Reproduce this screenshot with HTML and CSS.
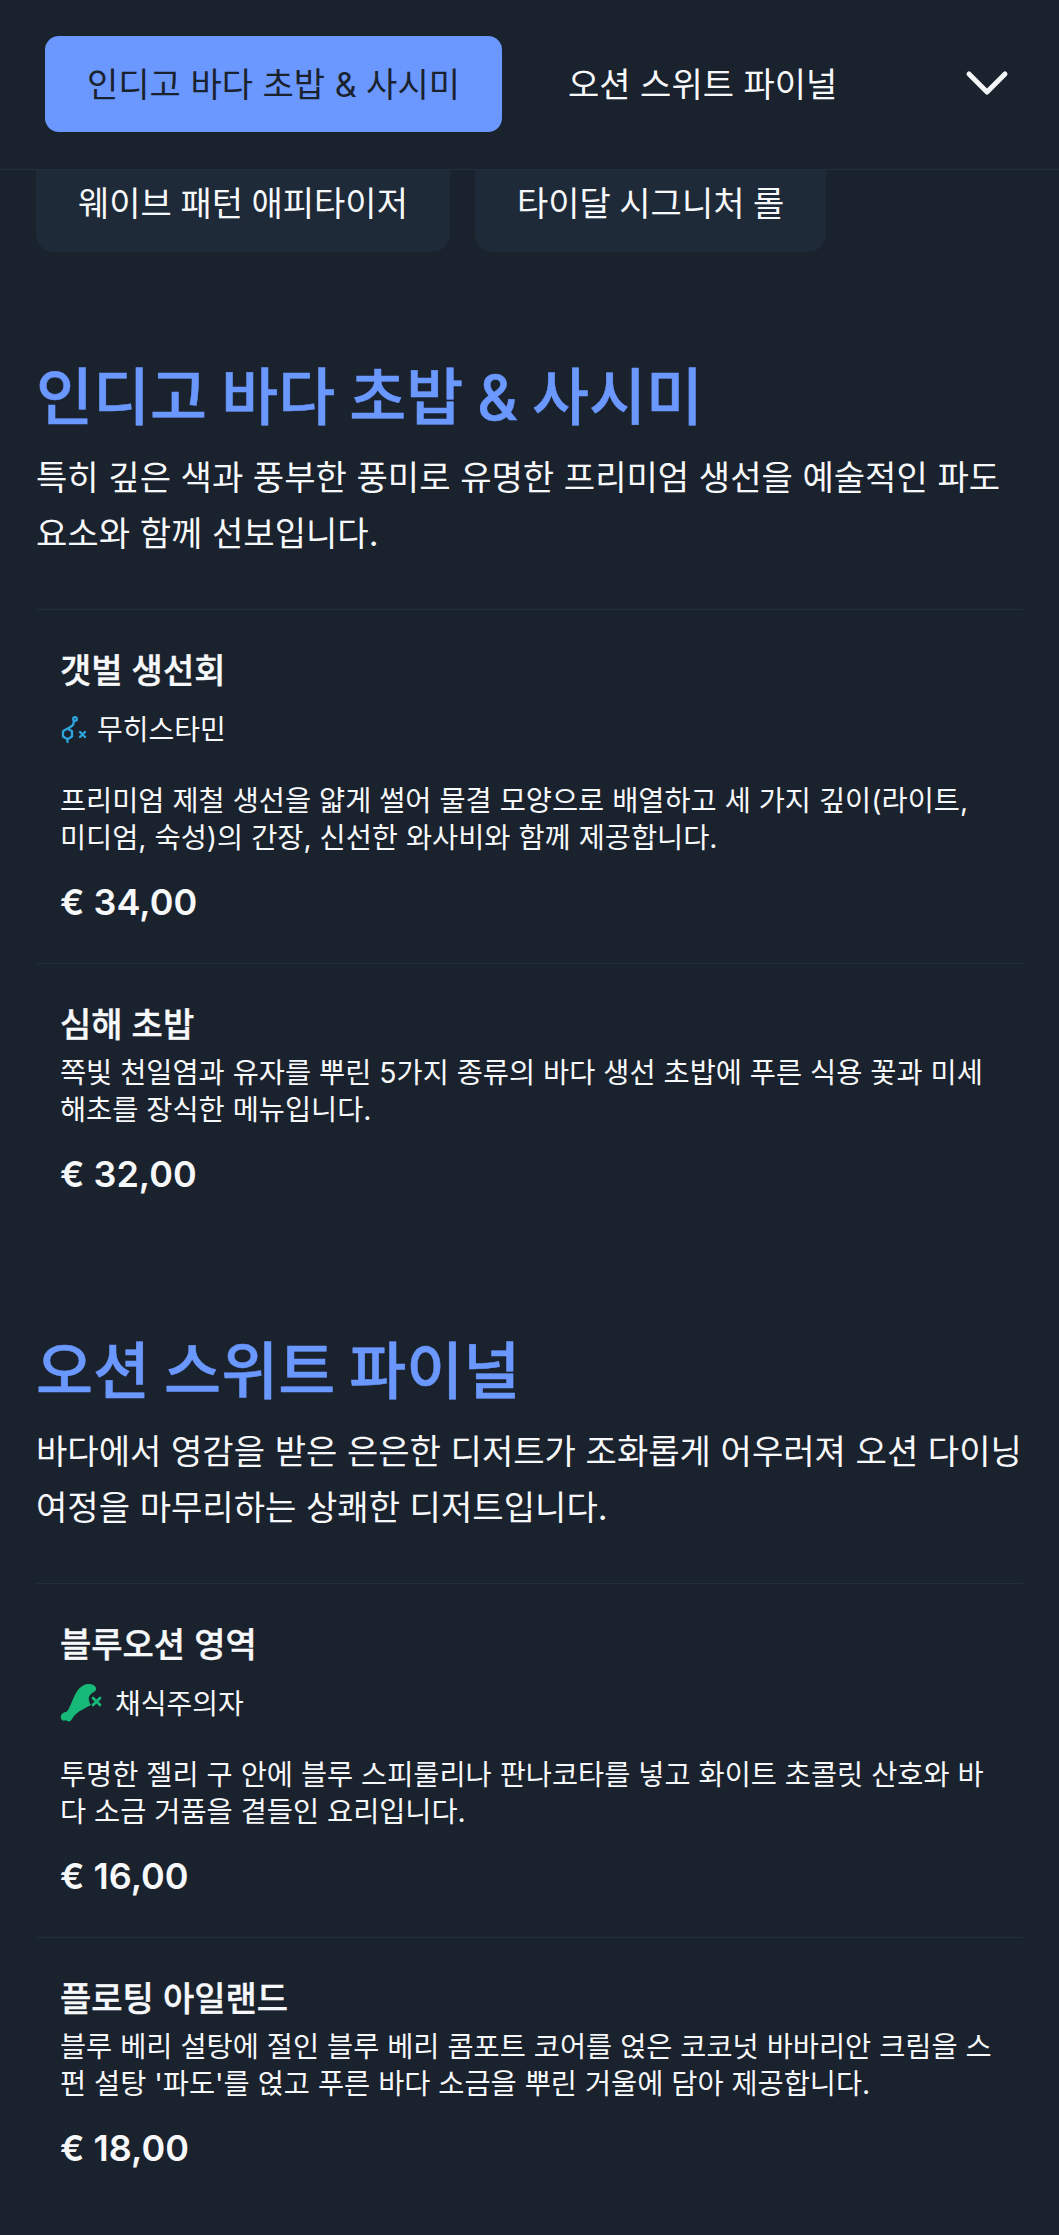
FILE: index.html
```html
<!DOCTYPE html>
<html lang="ko">
<head>
<meta charset="utf-8">
<title>메뉴</title>
<link rel="stylesheet" href="styles.css">
</head>
<body>
<header class="tabs">
  <a class="tab tab-active">인디고 바다 초밥 &amp; 사시미</a>
  <a class="tab">오션 스위트 파이널</a>
  <svg class="chevron" viewBox="0 0 44 28" aria-hidden="true"><path d="M4 4 L22 22 L40 4" fill="none" stroke="#f4f6f8" stroke-width="5" stroke-linecap="round" stroke-linejoin="round"/></svg>
</header>
<div class="chips">
  <a class="chip">웨이브 패턴 애피타이저</a>
  <a class="chip">타이달 시그니처 롤</a>
</div>
<main>
  <section class="section">
    <h2 class="section-title">인디고 바다 초밥 &amp; 사시미</h2>
    <p class="section-desc">특히 깊은 색과 풍부한 풍미로 유명한 프리미엄 생선을 예술적인 파도 요소와 함께 선보입니다.</p>
    <ul class="items">
      <li class="item">
        <h3 class="item-name">갯벌 생선회</h3>
        <div class="diet">
          <svg class="diet-icon" viewBox="0 0 26 28" aria-hidden="true"><g fill="none" stroke="#2ea3dc" stroke-width="2.300" stroke-linecap="round" stroke-linejoin="round"><path d="M7.500 12.500 L12 15.200 V20.600 L7.500 23.300 L3 20.600 V15.200 Z"/><path d="M9 12 L13 9 L14 5"/><circle cx="15" cy="3" r="1.900"/><path d="M7.500 23.300 V26"/></g><path d="M20 16 L25 21 M25 16 L20 21" fill="none" stroke="#2ea3dc" stroke-width="2.400" stroke-linecap="round"/></svg>
          <span>무히스타민</span>
        </div>
        <p class="item-desc">프리미엄 제철 생선을 얇게 썰어 물결 모양으로 배열하고 세 가지 깊이(라이트, 미디엄, 숙성)의 간장, 신선한 와사비와 함께 제공합니다.</p>
        <div class="price">€ 34,00</div>
      </li>
      <li class="item">
        <h3 class="item-name">심해 초밥</h3>
        <p class="item-desc tight">쪽빛 천일염과 유자를 뿌린 5가지 종류의 바다 생선 초밥에 푸른 식용 꽃과 미세 해초를 장식한 메뉴입니다.</p>
        <div class="price">€ 32,00</div>
      </li>
    </ul>
  </section>
  <section class="section">
    <h2 class="section-title">오션 스위트 파이널</h2>
    <p class="section-desc">바다에서 영감을 받은 은은한 디저트가 조화롭게 어우러져 오션 다이닝 여정을 마무리하는 상쾌한 디저트입니다.</p>
    <ul class="items">
      <li class="item">
        <h3 class="item-name">블루오션 영역</h3>
        <div class="diet">
          <svg class="diet-icon wide" viewBox="0 0 44 40" aria-hidden="true"><path fill="#17b978" d="M24 1 C28 -1 35 0 36 4 C37 7 33 8 31 10 C28 12 28 17 31 21 C26 24 20 26 16 30 C14 32 13 33 12 35 C11 38 7 38 6 36 C3 38 0 35 1 32 C1 30 4 28 6 28 C8 27 9 24 11 20 C14 13 17 4 24 1 Z"/><path d="M33 14 L40 21 M40 14 L33 21" fill="none" stroke="#17b978" stroke-width="2.800" stroke-linecap="round"/></svg>
          <span>채식주의자</span>
        </div>
        <p class="item-desc">투명한 젤리 구 안에 블루 스피룰리나 판나코타를 넣고 화이트 초콜릿 산호와 바다 소금 거품을 곁들인 요리입니다.</p>
        <div class="price">€ 16,00</div>
      </li>
      <li class="item">
        <h3 class="item-name">플로팅 아일랜드</h3>
        <p class="item-desc tight">블루 베리 설탕에 절인 블루 베리 콤포트 코어를 얹은 코코넛 바바리안 크림을 스펀 설탕 '파도'를 얹고 푸른 바다 소금을 뿌린 거울에 담아 제공합니다.</p>
        <div class="price">€ 18,00</div>
      </li>
    </ul>
  </section>
</main>
</body>
</html>
```
FILE: styles.css
```css
* { box-sizing: border-box; }
html, body { margin: 0; padding: 0; }
body {
  background: #1a222e;
  color: #f7f8fa;
  font-family: "Inter", "Noto Sans CJK KR", "Noto Sans", sans-serif;
  width: 1059px;
  height: 2235px;
  overflow: hidden;
}
.tabs {
  display: flex;
  align-items: center;
  height: 170px;
  padding: 0 50px 2px 45px;
  border-bottom: 1px solid #1f2f3d;
}
.tab {
  display: flex;
  align-items: center;
  height: 96px;
  padding: 0 42px 3px;
  font-size: 34px;
  border-radius: 14px;
  white-space: nowrap;
}
.tab-active {
  background: #6b98ff;
  color: #1a222e;
  width: 457px;
  margin-right: 24px;
}
.tab + .tab { flex: 1; }
.chevron { width: 44px; height: 28px; flex: none; }
.chips {
  display: flex;
  gap: 25px;
  padding: 0 36px;
  margin-bottom: 9px;
}
.chip {
  display: flex;
  align-items: center;
  height: 82px;
  padding: 0 42px 19px;
  font-size: 34px;
  word-spacing: -1px;
  background: #1e2a38;
  border-radius: 0 0 18px 18px;
  white-space: nowrap;
}
.section { padding: 0 36px; }
.section-title {
  margin: 0;
  padding-top: 97px;
  font-size: 62px;
  line-height: 80px;
  font-weight: 500;
  word-spacing: -2.5px;
  -webkit-text-stroke: 0.5px #6b98ff;
  color: #6b98ff;
}
.section-desc {
  margin: 12px 0 0;
  font-size: 34.1px;
  line-height: 56px;
  font-weight: 400;
}
.items { list-style: none; margin: 47px 0 0; padding: 0; }
.item {
  padding: 36px 24px 37px;
  border-top: 1px solid #1f2f3d;
}
.item-name { margin: 0; font-size: 34px; line-height: 50px; font-weight: 500; -webkit-text-stroke: 0.4px #f7f8fa; }
.diet {
  display: flex;
  align-items: center;
  gap: 11px;
  margin-top: 14px;
  font-size: 28px;
  line-height: 40px;
}
.diet-icon { width: 26px; height: 28px; flex: none; }
.diet-icon.wide { width: 44px; height: 40px; margin-right: 0; }
.item-desc { margin: 32px 0 0; font-size: 28.4px; line-height: 37px; }
.item-desc.tight { margin-top: 4px; }
.price { margin-top: 22px; font-size: 36px; line-height: 48px; font-weight: 600; }
```
